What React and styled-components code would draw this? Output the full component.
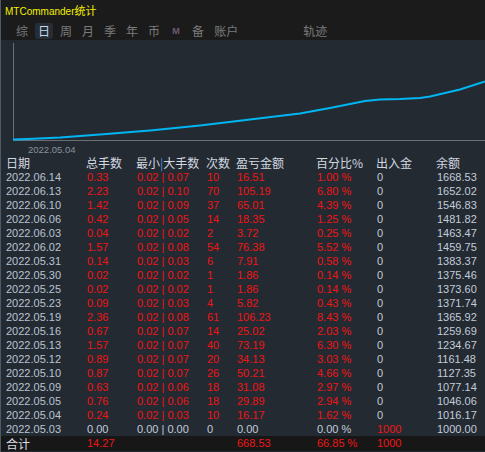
import React from 'react'
import styled, { createGlobalStyle } from 'styled-components'

const GlobalStyle = createGlobalStyle`
	html, body {
		margin: 0;
		padding: 0;
		background: #242a32;
	}
	body {
		font-family: 'Liberation Sans', Arial, 'Noto Sans CJK SC', sans-serif;
	}
`

const Shell = styled.div`
	width: 485px;
	height: 452px;
	overflow: hidden;
	border-left: 1px solid #4e5a68;
	box-sizing: border-box;
	display: flex;
	flex-direction: column;
`

const TopBar = styled.div`
	height: 40px;
	background: #1b1b1b;
	display: flex;
	flex-direction: column;
`

const Title = styled.div`
	height: 20px;
	line-height: 20px;
	padding-left: 4px;
	color: #f4f000;
	font-size: 10px;

	span {
		font-family: 'Noto Sans CJK SC', sans-serif;
		font-size: 11px;
	}
`

const TabRow = styled.div`
	display: flex;
	align-items: center;
	gap: 4px;
	padding: 3px 0 0 12px;
`

const Tab = styled.div`
	height: 16px;
	line-height: 16px;
	padding: 0 3px;
	border-radius: 2px;
	font-family: 'Noto Sans CJK SC', sans-serif;
	font-size: 12px;
	color: ${(p) => (p.$active ? '#c6d6ec' : '#7b7b7b')};
	background: ${(p) => (p.$active ? '#252d37' : 'transparent')};
	margin-left: ${(p) => p.$push || 0}px;
`

const MTab = styled(Tab)`
	width: 12px;
	text-align: center;
	font-family: 'Liberation Sans', sans-serif;
	font-size: 9px;
	font-weight: bold;
	color: #6c5c70;
`

const Panel = styled.div`
	flex: 1;
	background: #242a32;
	display: flex;
	flex-direction: column;
`

const ChartArea = styled.div`
	height: 116px;
	display: flex;
	flex-direction: column;
`

const ChartLabel = styled.div`
	padding-left: 27px;
	height: 13px;
	line-height: 13px;
	font-size: 9.5px;
	color: #8a929c;
`

const Table = styled.div`
	display: flex;
	flex-direction: column;
`

const Row = styled.div`
	display: grid;
	grid-template-columns: 80px 50px 70px 30px 80px 60px 60px 39px;
	padding-left: 5px;
	height: ${(p) => (p.$total ? 15 : 14)}px;
	line-height: ${(p) => (p.$total ? 15 : 14)}px;
	background: ${(p) => (p.$total ? '#171717' : 'transparent')};
	font-size: 11px;
	white-space: nowrap;
`

const Head = styled.div`
	font-family: 'Noto Sans CJK SC', sans-serif;
	font-size: 12px;
	color: #d2d8e0;

	b {
		font-weight: normal;
		color: #4d8fd6;
	}
`

const Cell = styled.div`
	padding-left: 1px;
	color: ${(p) => (p.$red ? '#ee1515' : '#c2ccda')};
	text-align: ${(p) => (p.$right ? 'right' : 'left')};
`

const DateCell = styled.div`
	color: #b9c4d3;
`

const TotalLabel = styled.div`
	font-family: 'Noto Sans CJK SC', sans-serif;
	font-size: 12px;
	color: #d8dde4;
`

const rows = [
	['2022.06.14', '0.33', '0.02', '0.07', '10', '16.51', '1.00', '1668.53'],
	['2022.06.13', '2.23', '0.02', '0.10', '70', '105.19', '6.80', '1652.02'],
	['2022.06.10', '1.42', '0.02', '0.09', '37', '65.01', '4.39', '1546.83'],
	['2022.06.06', '0.42', '0.02', '0.05', '14', '18.35', '1.25', '1481.82'],
	['2022.06.03', '0.04', '0.02', '0.02', '2', '3.72', '0.25', '1463.47'],
	['2022.06.02', '1.57', '0.02', '0.08', '54', '76.38', '5.52', '1459.75'],
	['2022.05.31', '0.14', '0.02', '0.03', '6', '7.91', '0.58', '1383.37'],
	['2022.05.30', '0.02', '0.02', '0.02', '1', '1.86', '0.14', '1375.46'],
	['2022.05.25', '0.02', '0.02', '0.02', '1', '1.86', '0.14', '1373.60'],
	['2022.05.23', '0.09', '0.02', '0.03', '4', '5.82', '0.43', '1371.74'],
	['2022.05.19', '2.36', '0.02', '0.08', '61', '106.23', '8.43', '1365.92'],
	['2022.05.16', '0.67', '0.02', '0.07', '14', '25.02', '2.03', '1259.69'],
	['2022.05.13', '1.57', '0.02', '0.07', '40', '73.19', '6.30', '1234.67'],
	['2022.05.12', '0.89', '0.02', '0.07', '20', '34.13', '3.03', '1161.48'],
	['2022.05.10', '0.87', '0.02', '0.07', '26', '50.21', '4.66', '1127.35'],
	['2022.05.09', '0.63', '0.02', '0.06', '18', '31.08', '2.97', '1077.14'],
	['2022.05.05', '0.76', '0.02', '0.06', '18', '29.89', '2.94', '1046.06'],
	['2022.05.04', '0.24', '0.02', '0.03', '10', '16.17', '1.62', '1016.17'],
]

const curve = [
	[13, 100], [28, 99.5], [60, 98], [100, 95], [150, 91], [200, 86], [250, 80],
	[300, 74], [330, 68.5], [365, 61.5], [380, 60], [400, 59.5], [420, 58.5],
	[430, 57], [460, 50], [485, 42],
]

const Chart = () => (
	<svg width="484" height="103" style={{ display: 'block' }}>
		<line x1="12.5" y1="3" x2="12.5" y2="100.5" stroke="#6b6f75" strokeWidth="1" />
		<line x1="12" y1="100.5" x2="484" y2="100.5" stroke="#6b6f75" strokeWidth="1" />
		<polyline
			points={curve.map(([x, y]) => `${x - 1},${y - 0.5}`).join(' ')}
			fill="none"
			stroke="#00b6f2"
			strokeWidth="2"
		/>
	</svg>
)

const tabs = ['综', '日', '周', '月', '季', '年', '币']

export default function App() {
	return (
		<>
			<GlobalStyle />
			<Shell>
				<TopBar>
					<Title>
						MTCommander<span>统计</span>
					</Title>
					<TabRow>
						{tabs.map((t) => (
							<Tab key={t} $active={t === '日'}>
								{t}
							</Tab>
						))}
						<MTab>M</MTab>
						<Tab>备</Tab>
						<Tab>账户</Tab>
						<Tab $push={55}>轨迹</Tab>
					</TabRow>
				</TopBar>
				<Panel>
					<ChartArea>
						<Chart />
						<ChartLabel>2022.05.04</ChartLabel>
					</ChartArea>
					<Table>
						<Row>
							<Head>日期</Head>
							<Head>总手数</Head>
							<Head>
								最小<b>|</b>大手数
							</Head>
							<Head>次数</Head>
							<Head>盈亏金额</Head>
							<Head>百分比%</Head>
							<Head>出入金</Head>
							<Head>余额</Head>
						</Row>
						{rows.map((r) => (
							<Row key={r[0]}>
								<DateCell>{r[0]}</DateCell>
								<Cell $red>{r[1]}</Cell>
								<Cell $red>
									{r[2]} | {r[3]}
								</Cell>
								<Cell $red>{r[4]}</Cell>
								<Cell $red>{r[5]}</Cell>
								<Cell $red>{r[6]} %</Cell>
								<Cell>0</Cell>
								<Cell $right>{r[7]}</Cell>
							</Row>
						))}
						<Row>
							<DateCell>2022.05.03</DateCell>
							<Cell>0.00</Cell>
							<Cell>0.00 | 0.00</Cell>
							<Cell>0</Cell>
							<Cell>0.00</Cell>
							<Cell>0.00 %</Cell>
							<Cell $red>1000</Cell>
							<Cell $right>1000.00</Cell>
						</Row>
						<Row $total>
							<TotalLabel>合计</TotalLabel>
							<Cell $red>14.27</Cell>
							<Cell />
							<Cell />
							<Cell $red>668.53</Cell>
							<Cell $red>66.85 %</Cell>
							<Cell $red>1000</Cell>
							<Cell />
						</Row>
					</Table>
				</Panel>
			</Shell>
		</>
	)
}
